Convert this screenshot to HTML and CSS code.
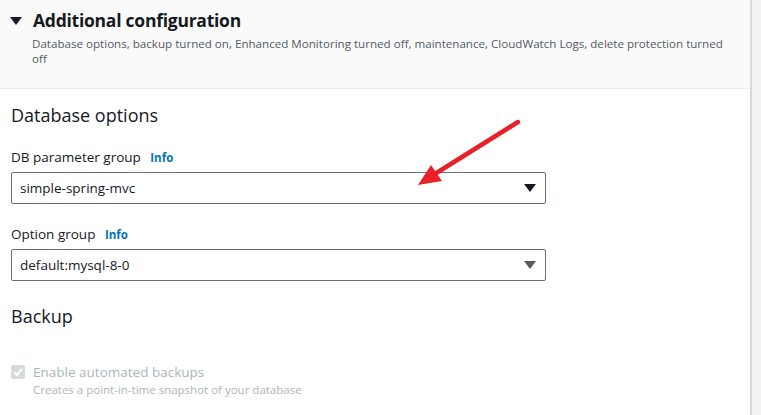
FILE: index.html
```
<!DOCTYPE html>
<html>
<head>
<meta charset="utf-8">
<link rel="stylesheet" href="styles.css">
</head>
<body>
<div class="page">
  <div class="panel">
    <div class="header">
      <div class="title-row">
        <svg class="caret" width="12" height="8" viewBox="0 0 12 8"><polygon points="0,0 12,0 6,8" fill="#16191f"/></svg>
        <h2 class="title">Additional configuration</h2>
      </div>
      <p class="desc">Database options, backup turned on, Enhanced Monitoring turned off, maintenance, CloudWatch Logs, delete protection turned off</p>
    </div>
    <div class="content">
      <h3 class="section">Database options</h3>
      <div class="field">
        <div class="label">DB parameter group <span class="info">Info</span></div>
        <div class="select">
          <span>simple-spring-mvc</span>
          <svg width="12" height="8" viewBox="0 0 12 8"><polygon points="0,0 12,0 6,8" fill="#16191f"/></svg>
        </div>
      </div>
      <div class="field">
        <div class="label">Option group <span class="info">Info</span></div>
        <div class="select">
          <span>default:mysql-8-0</span>
          <svg width="12" height="8" viewBox="0 0 12 8"><polygon points="0,0 12,0 6,8" fill="#545b64"/></svg>
        </div>
      </div>
      <h3 class="section backup">Backup</h3>
      <div class="check-row">
        <span class="checkbox"><svg width="14" height="14" viewBox="0 0 14 14"><polyline points="3,7.5 6,10 11,3.5" fill="none" stroke="#fff" stroke-width="2"/></svg></span>
        <div>
          <div class="check-label">Enable automated backups</div>
          <div class="check-desc">Creates a point-in-time snapshot of your database</div>
        </div>
      </div>
    </div>
    <svg class="arrow" width="130" height="90" viewBox="0 0 130 90">
      <line x1="116" y1="8" x2="28" y2="63" stroke="#e8202a" stroke-width="4.5" stroke-linecap="round"/>
      <polygon points="16,71 29,51 40,67" fill="#e8202a"/>
    </svg>
  </div>
  <div class="gutter"></div>
</div>
</body>
</html>
```
FILE: styles.css
```
* { box-sizing: border-box; }
html, body { margin: 0; padding: 0; }
body {
  font-family: "Open Sans", "Noto Sans", sans-serif;
  color: #16191f;
  background: #fff;
  width: 761px;
  height: 415px;
  overflow: hidden;
}
.page { display: flex; height: 415px; }
.panel {
  position: relative;
  width: 752px;
  border-right: 2px solid #d5dbdb;
  background: #fff;
}
.gutter { flex: 1; background: #f2f3f3; }
.header {
  background: #fafafa;
  border-bottom: 1px solid #eaeded;
  height: 89px;
  padding: 8px 20px 0 10px;
}
.title-row { display: flex; align-items: center; gap: 11px; }
.caret { margin-top: 1px; }
.title {
  margin: 0;
  font-size: 17.5px;
  font-weight: 700;
  line-height: 24px;
  letter-spacing: -0.25px;
}
.desc {
  margin: 4px 0 0 22px;
  font-size: 11.6px;
  line-height: 15px;
  color: #545b64;
  width: 705px;
}
.content { padding: 14px 11px 0 11px; }
.section {
  margin: 0;
  font-size: 18px;
  font-weight: 400;
  line-height: 24px;
}
.field { margin-top: 20px; }
.field + .field { margin-top: 20px; }
.label {
  font-size: 13.5px;
  line-height: 20px;
  margin-bottom: 4px;
}
.info {
  color: #0073bb;
  font-weight: 700;
  font-size: 11.5px;
  margin-left: 6px;
}
.select {
  width: 535px;
  height: 32px;
  border: 1px solid #687078;
  border-radius: 2px;
  display: flex;
  align-items: center;
  justify-content: space-between;
  padding: 0 9px 0 8px;
  font-size: 13.5px;
}
.backup { margin-top: 23px; }
.check-row {
  display: flex;
  gap: 8px;
  margin-top: 34px;
}
.checkbox {
  width: 14px;
  height: 14px;
  background: #d5dbdb;
  border-radius: 2px;
  margin-top: 3px;
  display: flex;
}
.check-label { font-size: 13.5px; line-height: 20px; color: #aab7b8; }
.check-desc { font-size: 11.5px; line-height: 16px; color: #aab7b8; }
.arrow { position: absolute; left: 402px; top: 114px; }
```
